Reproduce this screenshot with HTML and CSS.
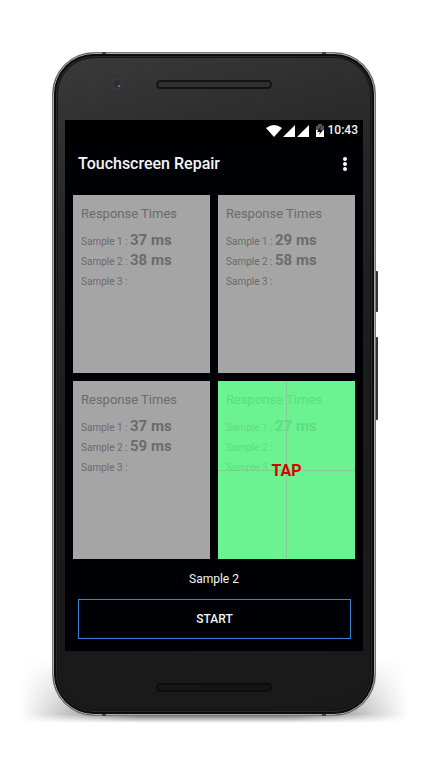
FILE: index.html
```html
<!DOCTYPE html>
<html lang="en">
<head>
<meta charset="utf-8">
<meta name="viewport" content="width=device-width, initial-scale=1">
<title>Touchscreen Repair</title>
<link rel="stylesheet" href="styles.css">
</head>
<body>
<div class="phone">
  <span class="side-key power"></span>
  <span class="side-key volume"></span>
  <div class="face">
    <div class="bezel top">
      <svg class="camera" viewBox="0 0 12 12" aria-hidden="true">
        <circle cx="6" cy="6" r="6" fill="#3b393b"/>
        <circle cx="6" cy="6" r="4" fill="#302d34"/>
        <circle cx="7" cy="6" r="2" fill="#302548"/>
        <circle cx="8" cy="8" r="1" fill="#a5746c"/>
      </svg>
      <span class="speaker"></span>
    </div>
    <main class="screen">
      <div class="status">
        <svg class="wifi" viewBox="0 0 16 12" aria-hidden="true"><path d="M0 3Q8-3 16 3L8 12Z" fill="#fff"/></svg>
        <svg class="signal" viewBox="0 0 12 12" aria-hidden="true"><path d="M0 12L12 0V12Z" fill="#fff"/></svg>
        <svg class="signal second" viewBox="0 0 12 12" aria-hidden="true"><path d="M0 12L12 0V12Z" fill="#fff"/></svg>
        <svg class="battery" viewBox="0 0 8 13" aria-hidden="true">
          <path d="M0 2H2V0H6V2H8V6H0Z" fill="#555"/>
          <path d="M0 6H8V13H0Z" fill="#fff"/>
          <path d="M5 2L1 8H4L3 11L7 6H4Z" fill="#050505"/>
        </svg>
        <span class="clock">10:43</span>
      </div>
      <header class="appbar">
        <h1>Touchscreen Repair</h1>
        <button class="more" aria-label="More options">
          <svg viewBox="0 0 4 14" aria-hidden="true"><circle cx="2" cy="2" r="2"/><circle cx="2" cy="7" r="2"/><circle cx="2" cy="12" r="2"/></svg>
        </button>
      </header>
      <div class="grid">
        <section class="card">
          <h2>Response Times</h2>
          <p>Sample 1 : <b>37 ms</b></p>
          <p>Sample 2 : <b>38 ms</b></p>
          <p>Sample 3 :</p>
        </section>
        <section class="card">
          <h2>Response Times</h2>
          <p>Sample 1 : <b>29 ms</b></p>
          <p>Sample 2 : <b>58 ms</b></p>
          <p>Sample 3 :</p>
        </section>
        <section class="card">
          <h2>Response Times</h2>
          <p>Sample 1 : <b>37 ms</b></p>
          <p>Sample 2 : <b>59 ms</b></p>
          <p>Sample 3 :</p>
        </section>
        <section class="card active">
          <h2>Response Times</h2>
          <p>Sample 1 : <b>27 ms</b></p>
          <p>Sample 2 :</p>
          <p>Sample 3 :</p>
          <button class="tap">TAP</button>
        </section>
      </div>
      <div class="current">Sample 2</div>
      <button class="start">START</button>
    </main>
    <div class="bezel bottom"><span class="speaker"></span></div>
  </div>
</div>
</body>
</html>
```
FILE: styles.css
```css
* { box-sizing: border-box; }

body {
  margin: 0;
  padding: 52px 54px 52px 52px;
  background: #fff;
  font-family: Roboto, "Liberation Sans", sans-serif;
}

h1, h2, p { margin: 0; font-weight: 400; }

button {
  padding: 0;
  border: 0;
  background: none;
  color: inherit;
  font: inherit;
}

.phone { position: relative; }

/* Ground shadow, fading out to both sides of the lower edge */
.phone::before {
  content: "";
  position: absolute;
  left: -32px;
  right: -32px;
  bottom: -7px;
  height: 64px;
  background: linear-gradient(to bottom, transparent, #666 86%, transparent);
  -webkit-mask-image: linear-gradient(to right, transparent, #000 30%, #000 70%, transparent);
  mask-image: linear-gradient(to right, transparent, #000 30%, #000 70%, transparent);
}

.side-key {
  position: absolute;
  right: -2px;
  width: 3px;
  border-radius: 1px;
  background: #333;
}
.power { top: 219px; height: 41px; }
.volume { top: 285px; height: 83px; }

.face {
  position: relative;
  padding: 0 11px;
  border: 1px solid #777;
  border-radius: 42px;
  background: linear-gradient(165deg, #3a3a3a, #252525 25%, #1b1b1b 55%, #191919);
  box-shadow: inset 0 0 0 1px #aaa, inset 0 0 0 3px #0c0c0c, inset 0 0 0 4px #2a2a2a, inset 0 0 0 5px #151515;
}

/* Antenna bands on the top and bottom edges */
.face::before,
.face::after {
  content: "";
  position: absolute;
  left: 49px;
  right: 49px;
  height: 2px;
  border: solid #444;
  border-width: 0 4px;
}
.face::before { top: -1px; }
.face::after { bottom: -1px; }

.bezel {
  position: relative;
  display: flex;
  justify-content: center;
}
.top { height: 67px; padding-top: 27px; }
.bottom { height: 64px; padding-top: 32px; }

.camera {
  position: absolute;
  left: 47px;
  top: 25px;
  width: 12px;
  height: 12px;
}

.speaker {
  width: 116px;
  height: 9px;
  border: 2px solid #131313;
  border-radius: 5px;
  background: #303030;
}
.bottom .speaker { border-color: #0c0c0c; background: #151515; }

.screen {
  display: flex;
  flex-direction: column;
  margin: 0 1px;
  padding: 0 8px 12px;
  background: #000105;
  color: #f5f5f5;
}

.status {
  display: flex;
  align-items: center;
  justify-content: flex-end;
  height: 21px;
  margin: 0 -8px;
  padding-right: 5px;
  background: #000;
}
.wifi { width: 16px; height: 12px; }
.signal { width: 12px; height: 12px; margin-left: 1px; }
.second { margin-left: 2px; }
.battery { width: 8px; height: 13px; margin: 0 4px 0 7px; }
.clock { font-size: 12px; line-height: 21px; font-weight: 500; }

.appbar {
  display: flex;
  align-items: center;
  justify-content: space-between;
  height: 54px;
  padding: 0 8px 8px 5px;
}
.appbar h1 { font-size: 16px; line-height: 24px; font-weight: 500; }
.more { display: flex; height: 24px; align-items: center; }
.more svg { width: 4px; height: 14px; fill: #fff; }

.grid {
  display: grid;
  grid-template-columns: 1fr 1fr;
  gap: 8px;
}
.card {
  position: relative;
  min-height: 178px;
  padding: 8px;
  background: #a5a5a5;
  color: #6b6b6b;
}
.card h2 { margin-bottom: 8px; font-size: 13px; line-height: 21px; }
.card p { height: 20px; font-size: 10px; line-height: 20px; }
.card b { font-size: 15px; line-height: 16px; font-weight: 700; }

.active {
  background:
    linear-gradient(#8bc79b, #8bc79b) center / 1px 100% no-repeat,
    linear-gradient(#8bc79b, #8bc79b) center / 100% 1px no-repeat,
    #6bf291;
  color: #5fdd84;
}
.tap {
  position: absolute;
  inset: 0;
  width: 100%;
  color: #d80000;
  font-size: 16px;
  font-weight: 700;
}

.current {
  height: 40px;
  font-size: 12px;
  line-height: 40px;
  text-align: center;
}

.start {
  height: 40px;
  margin: 0 4px 0 5px;
  border: 1px solid #3a83da;
  font-size: 12px;
  font-weight: 500;
}
```
